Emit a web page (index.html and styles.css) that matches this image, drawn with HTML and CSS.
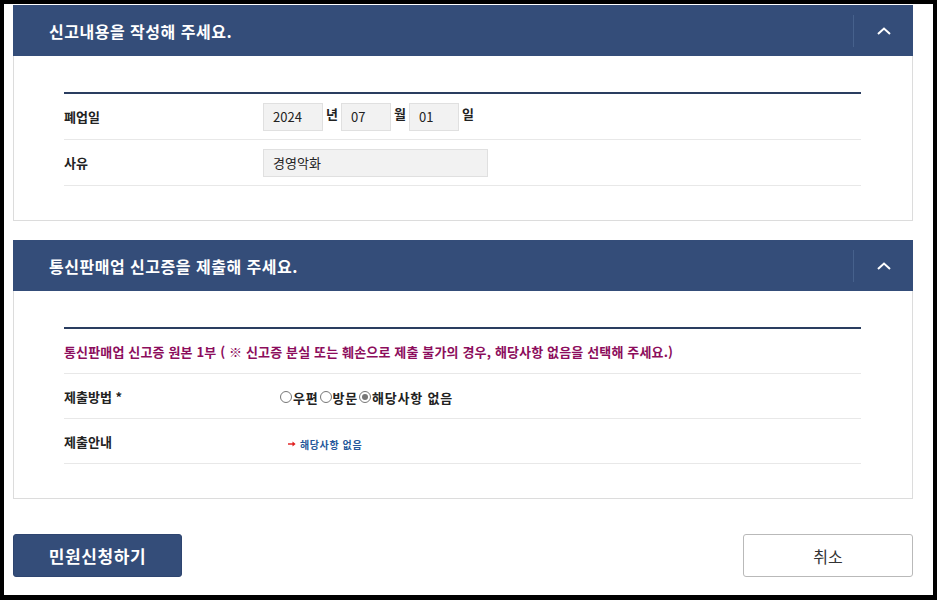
FILE: index.html
```html
<!DOCTYPE html>
<html lang="ko">
<head>
<meta charset="utf-8">
<title>통신판매업 폐업신고</title>
<link rel="stylesheet" href="styles.css">
</head>
<body>
<div class="frame">

  <!-- 신고내용 -->
  <div class="sect">
    <div class="sect-head">
      <h2>신고내용을 작성해 주세요.</h2>
      <span class="toggle">
        <svg width="14" height="8" viewBox="0 0 14 8"><path d="M1 7 L7 1.5 L13 7" fill="none" stroke="#fff" stroke-width="2"/></svg>
      </span>
    </div>
    <div class="sect-body first">
      <div class="tbl">
        <div class="row">
          <div class="lbl">폐업일</div>
          <div class="val">
            <span class="box w60">2024</span><span class="unit">년</span>
            <span class="box w50">07</span><span class="unit">월</span>
            <span class="box w50">01</span><span class="unit">일</span>
          </div>
        </div>
        <div class="row">
          <div class="lbl">사유</div>
          <div class="val"><span class="box w225">경영악화</span></div>
        </div>
      </div>
    </div>
  </div>

  <!-- 신고증 제출 -->
  <div class="sect">
    <div class="sect-head">
      <h2>통신판매업 신고증을 제출해 주세요.</h2>
      <span class="toggle">
        <svg width="14" height="8" viewBox="0 0 14 8"><path d="M1 7 L7 1.5 L13 7" fill="none" stroke="#fff" stroke-width="2"/></svg>
      </span>
    </div>
    <div class="sect-body">
      <div class="tbl">
        <div class="row notice">통신판매업 신고증 원본 1부 ( ※ 신고증 분실 또는 훼손으로 제출 불가의 경우, 해당사항 없음을 선택해 주세요.)</div>
        <div class="row">
          <div class="lbl">제출방법 *</div>
          <div class="val radios">
            <span class="radio"></span>우편<span class="radio"></span>방문<span class="radio on"></span>해당사항 없음
          </div>
        </div>
        <div class="row">
          <div class="lbl">제출안내</div>
          <div class="val guide">
            <svg class="arrow" width="8" height="6" viewBox="0 0 8 6"><path d="M0 3 H6" stroke="#e01c1c" stroke-width="1.4"/><path d="M4.5 0.6 L7.6 3 L4.5 5.4 Z" fill="#e01c1c"/></svg>해당사항 없음
          </div>
        </div>
      </div>
    </div>
  </div>

  <div class="btns">
    <button class="btn btn-main">민원신청하기</button>
    <button class="btn btn-cancel">취소</button>
  </div>

</div>
</body>
</html>
```

FILE: styles.css
```css
html, body {margin: 0; padding: 0; background: #fff;}
body {font-family: "Noto Sans CJK KR", "Noto Sans", sans-serif; color: #222;}

.frame {box-sizing: border-box; width: 937px; height: 600px; border: solid #000; border-width: 4px 4px 5px 4px; padding: 1px 20px 0 9px;}

.sect {margin-bottom: 19px;}
.sect-head {height: 51px; background: #344d79; display: flex; align-items: center; padding-left: 36px;}
.sect-head h2 {margin: 0; flex: 1; font-size: 16px; font-weight: 700; color: #fff; letter-spacing: 0.5px;}
.toggle {width: 59px; height: 32px; border-left: 1px solid #46618c; display: flex; align-items: center; justify-content: center;}

.sect-body {border: 1px solid #dcdcdc; border-top: 0; padding: 36px 51px 34px 50px;}
.tbl {border-top: 2px solid #2a3d60;}
.row {height: 45px; border-bottom: 1px solid #e8e8e8; display: flex; align-items: center; box-sizing: border-box;}
.first .row {height: 46px;}
.lbl {width: 199px; font-size: 13px; font-weight: 700; color: #222;}
.val {display: flex; align-items: center; font-size: 13px;}

.box {box-sizing: border-box; height: 28px; background: #f2f2f2; border: 1px solid #e0e0e0; display: flex; align-items: center; padding-left: 9px; color: #222;}
.w60 {width: 60px;}
.w50 {width: 50px;}
.w225 {width: 225px;}
.unit {font-weight: 700; width: 18px; text-align: center; align-self: flex-start; margin-top: 1px;}

.notice {font-size: 13px; font-weight: 700; color: #8c0d5c; letter-spacing: 0.15px;}

.radios {padding-left: 16px; font-weight: 700; color: #222; margin-top: 2px; letter-spacing: 0.8px;}
.radio {width: 12px; height: 12px; border: 1px solid #777; border-radius: 50%; box-sizing: border-box; margin: 0 1px; position: relative;}
.radio.on::after {content: ""; position: absolute; left: 2px; top: 2px; width: 6px; height: 6px; border-radius: 50%; background: #777;}

.guide {padding-left: 25px; font-size: 10px; font-weight: 700; color: #25579a; margin-top: 6px; letter-spacing: 0.6px;}
.arrow {margin-right: 4px;}

.btns {display: flex; justify-content: space-between; margin-top: 35px;}
.btn {font-family: inherit; height: 43px; border-radius: 3px; font-size: 16px; cursor: pointer;}
.btn-main {width: 169px; background: #344d79; border: 1px solid #2e4570; color: #fff; font-weight: 700; font-size: 17px; letter-spacing: 0.6px;}
.btn-cancel {width: 170px; background: #fff; border: 1px solid #b9b9b9; color: #333;}
```
